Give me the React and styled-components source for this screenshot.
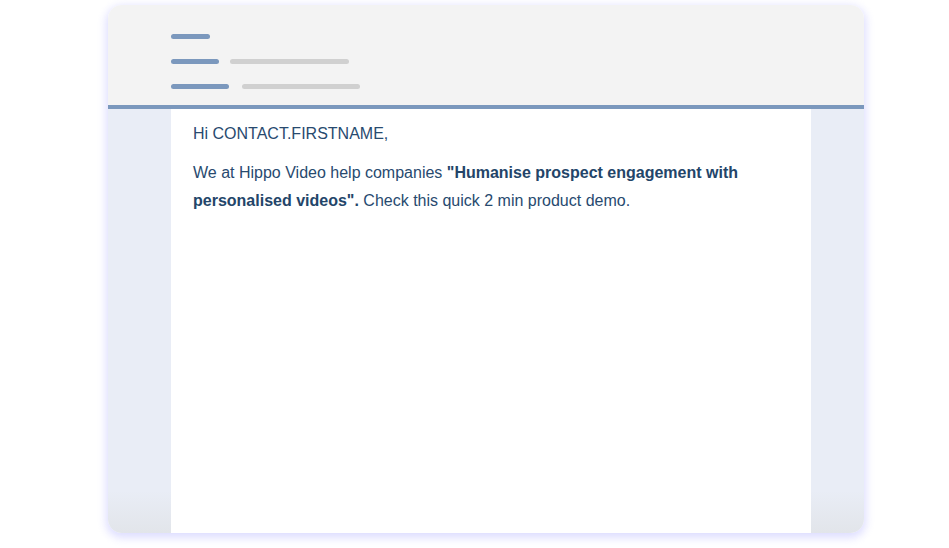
import styled, { createGlobalStyle } from "styled-components";

const Global = createGlobalStyle`
  html, body {
    margin: 0;
    padding: 0;
    background: #ffffff;
  }
  body {
    font-family: "Liberation Sans", Arial, sans-serif;
  }
`;

const Page = styled.div`
  width: 949px;
  height: 548px;
  padding: 5px 0 0 108px;
  box-sizing: border-box;
`;

const Card = styled.div`
  width: 756px;
  height: 528px;
  border-radius: 14px;
  overflow: hidden;
  display: flex;
  flex-direction: column;
  box-shadow: 0 3px 8px 2px rgba(205, 205, 255, 0.65);
`;

const Header = styled.div`
  height: 104px;
  flex: none;
  box-sizing: border-box;
  background: #f3f3f3;
  border-bottom: 4px solid #7b98bd;
  padding: 28px 0 0 63px;
  display: flex;
  flex-direction: column;
  gap: 19px;
`;

const HeaderRow = styled.div`
  display: flex;
  align-items: center;
  gap: ${(p) => p.$gap || 11}px;
  height: 6px;
`;

const Bar = styled.div`
  height: 5px;
  border-radius: 3px;
  width: ${(p) => p.$w}px;
  background: ${(p) => (p.$muted ? "#d0d0d0" : "#7b98bd")};
`;

const Body = styled.div`
  flex: 1;
  display: grid;
  grid-template-columns: 63px 1fr 53px;
`;

const Side = styled.div`
  background: linear-gradient(to bottom, #e9edf6 0%, #e9edf6 90%, #e2e5ea 100%);
`;

const Content = styled.div`
  background: #ffffff;
  padding: 15px 22px 0 22px;
  color: #284a6f;
  font-size: 16px;
`;

const Greeting = styled.p`
  margin: 0 0 15px;
  line-height: 20px;
`;

const Para = styled.p`
  margin: 0;
  line-height: 28px;

  strong {
    font-weight: bold;
    color: #234569;
  }
`;

export default function App() {
  return (
    <Page>
      <Global />
      <Card>
        <Header>
          <HeaderRow>
            <Bar $w={39} />
          </HeaderRow>
          <HeaderRow>
            <Bar $w={48} />
            <Bar $w={119} $muted />
          </HeaderRow>
          <HeaderRow $gap={13}>
            <Bar $w={58} />
            <Bar $w={118} $muted />
          </HeaderRow>
        </Header>
        <Body>
          <Side />
          <Content>
            <Greeting>Hi CONTACT.FIRSTNAME,</Greeting>
            <Para>
              We at Hippo Video help companies{" "}
              <strong>"Humanise prospect engagement with personalised videos".</strong>{" "}
              Check this quick 2 min product demo.
            </Para>
          </Content>
          <Side />
        </Body>
      </Card>
    </Page>
  );
}
